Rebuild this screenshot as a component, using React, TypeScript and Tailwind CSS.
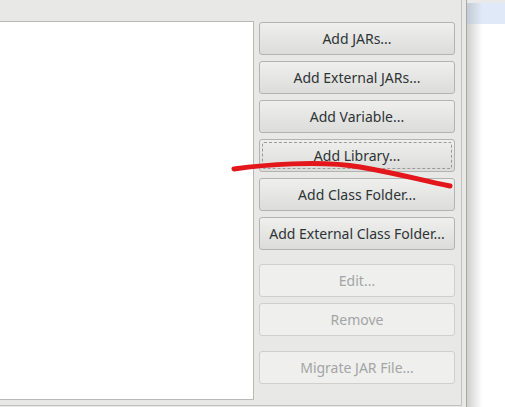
import React from 'react';

const buttons = [
  { label: 'Add JARs...' },
  { label: 'Add External JARs...' },
  { label: 'Add Variable...' },
  { label: 'Add Library...', focused: true },
  { label: 'Add Class Folder...' },
  { label: 'Add External Class Folder...' },
];

const disabledButtons = ['Edit...', 'Remove'];

const Btn = ({ label, focused, disabled }: { label: string; focused?: boolean; disabled?: boolean }) => {
  if (disabled) {
    return (
      <div className="h-[33px] w-[196px] rounded-[3px] border border-[#cfcfcd] bg-[#efefee] flex items-center justify-center text-[14px] text-[#a3a5a5]">
        {label}
      </div>
    );
  }
  return (
    <div className="h-[33px] w-[196px] rounded-[3px] border border-[#b3b3b0] bg-gradient-to-b from-[#efefed] to-[#dcdcda] p-[2px]">
      <div
        className={
          'h-full w-full flex items-center justify-center text-[14px] text-[#2e3436] rounded-[2px] ' +
          (focused ? 'border border-dashed border-[#9a9a98]' : 'border border-transparent')
        }
      >
        {label}
      </div>
    </div>
  );
};

export default function App() {
  return (
    <div
      className="relative flex w-[505px] h-[407px] bg-[#e8e8e7] overflow-hidden"
      style={{ fontFamily: '"Noto Sans", "DejaVu Sans", sans-serif' }}
    >
      <div className="w-[462px] h-[406px] border-r border-b border-[#c2c2c0] pt-[21px] flex">
        <div className="w-[254px] h-[379px] bg-white border-t border-r border-b border-[#b8b8b6]" />
        <div className="ml-[5px] pt-[1px] flex flex-col">
          <div className="flex flex-col gap-[6px]">
            {buttons.map((b) => (
              <Btn key={b.label} label={b.label} focused={b.focused} />
            ))}
          </div>
          <div className="mt-[14px] flex flex-col gap-[6px]">
            {disabledButtons.map((l) => (
              <Btn key={l} label={l} disabled />
            ))}
          </div>
          <div className="mt-[15px]">
            <Btn label="Migrate JAR File..." disabled />
          </div>
        </div>
      </div>
      <div className="w-[4px]" />
      <div className="flex-1 border-l border-[#a8a8a6] bg-gradient-to-r from-[#cfcfcf] via-white via-[40%] to-white">
        <div className="h-[3px] bg-[#e9e9e9]" />
        <div className="h-[21px] bg-[#dfe9f7] bg-gradient-to-r from-[#c3cad4] via-[#dfe9f7] via-[40%] to-[#dfe9f7]" />
      </div>

      <svg className="absolute left-0 top-0 pointer-events-none" width="505" height="407">
        <path
          d="M234 169 C 262 165, 320 160, 360 167 S 420 180, 450 186"
          fill="none"
          stroke="#e3161c"
          strokeWidth="5"
          strokeLinecap="round"
        />
      </svg>
    </div>
  );
}
